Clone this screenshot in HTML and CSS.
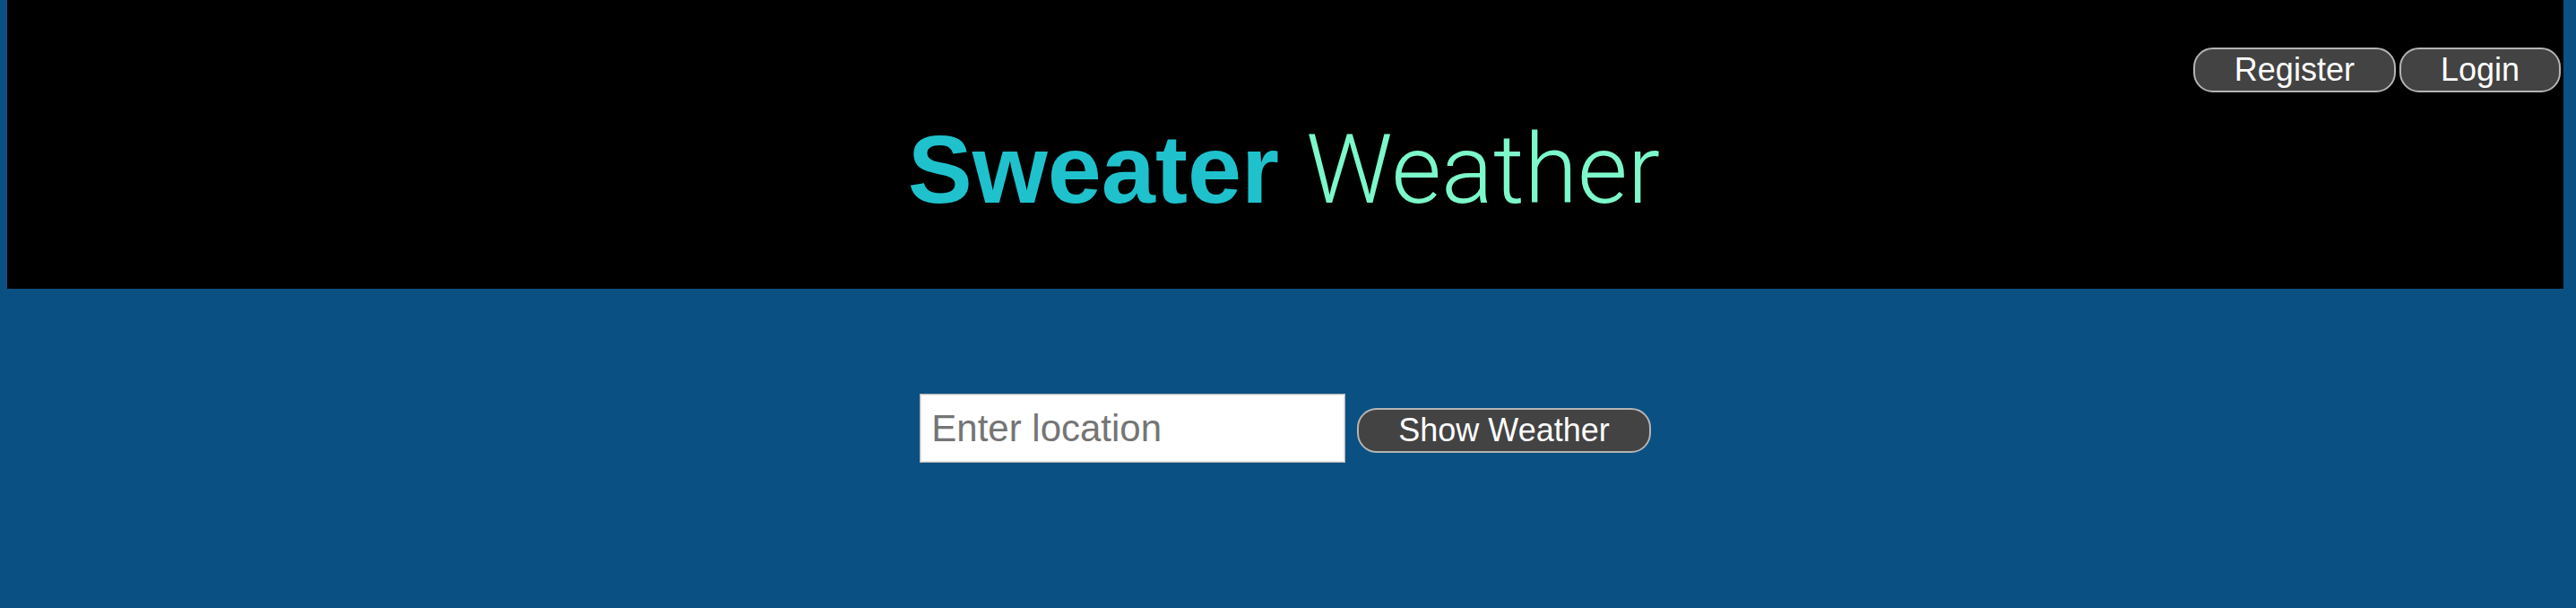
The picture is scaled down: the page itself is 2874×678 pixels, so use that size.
FILE: index.html
```html
<!DOCTYPE html>
<html lang="en">
<head>
<meta charset="utf-8">
<title>Sweater Weather</title>
<link rel="stylesheet" href="styles.css">
</head>
<body>
  <header class="masthead">
    <nav class="auth-nav">
      <button class="pill-btn" type="button">Register</button>
      <button class="pill-btn" type="button">Login</button>
    </nav>
    <h1 class="brand"><span class="brand-bold">Sweater</span> <span class="brand-light">Weather</span></h1>
  </header>
  <main class="search">
    <form class="search-form">
      <input class="location-input" type="text" placeholder="Enter location">
      <button class="pill-btn show-btn" type="button">Show Weather</button>
    </form>
  </main>
</body>
</html>
```
FILE: styles.css
```css
html, body {
  background: #0a5083;
}
body {
  margin: 0 14px 0 8px;
  font-family: "Liberation Sans", Arial, Helvetica, sans-serif;
}
.masthead {
  background: #000;
  height: 322px;
  box-sizing: border-box;
  padding: 53px 3px 0 0;
}
.auth-nav {
  display: flex;
  justify-content: flex-end;
  gap: 4px;
}
.pill-btn {
  box-sizing: border-box;
  height: 50px;
  padding: 0 44px;
  border: 2px solid #b4b4b4;
  border-radius: 22px;
  background: #434343;
  color: #fff;
  font-family: "Liberation Sans", Arial, Helvetica, sans-serif;
  font-size: 36px;
  line-height: 46px;
  margin: 0;
}
.brand {
  margin: 32px 0 0;
  text-align: center;
  font-size: 108px;
  line-height: 1;
  font-weight: normal;
}
.brand-bold {
  font-family: "Liberation Sans", Arial, sans-serif;
  font-weight: 700;
  color: #1fc2cc;
}
.brand-light {
  font-family: Roboto, "Liberation Sans", sans-serif;
  font-weight: 300;
  color: #7cf8cb;
}
.search {
  padding-top: 117px;
}
.search-form {
  display: flex;
  justify-content: center;
  align-items: baseline;
  gap: 13px;
}
.location-input {
  box-sizing: border-box;
  width: 475px;
  height: 77px;
  padding: 0 12px;
  border: 1px solid #b9b9b9;
  outline: 1px solid #e6e6e6;
  outline-offset: -2px;
  background: #fff;
  font-family: "Liberation Sans", Arial, sans-serif;
  font-size: 42px;
  color: #333;
  margin: 0;
}
.location-input::placeholder {
  color: #757575;
}
```
